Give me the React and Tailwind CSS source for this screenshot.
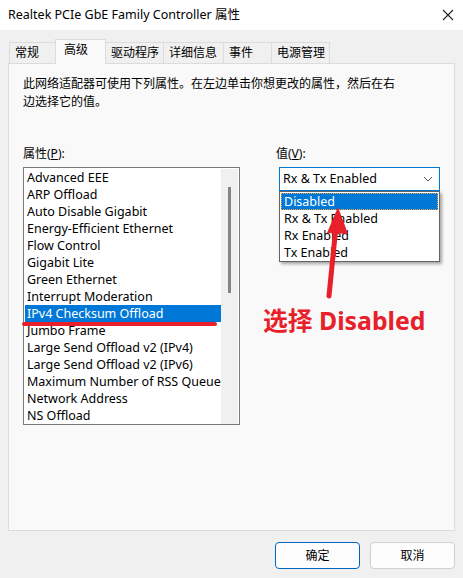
import React from "react";

const FONT = { fontFamily: '"Noto Sans", "Noto Sans CJK SC", sans-serif' };

const props = [
  "Advanced EEE",
  "ARP Offload",
  "Auto Disable Gigabit",
  "Energy-Efficient Ethernet",
  "Flow Control",
  "Gigabit Lite",
  "Green Ethernet",
  "Interrupt Moderation",
  "IPv4 Checksum Offload",
  "Jumbo Frame",
  "Large Send Offload v2 (IPv4)",
  "Large Send Offload v2 (IPv6)",
  "Maximum Number of RSS Queues",
  "Network Address",
  "NS Offload",
];

const tabs = [
  { t: "常规", w: "w-[47px]" },
  { t: "高级", w: "w-[51px]", sel: true },
  { t: "驱动程序", w: "w-[59px]" },
  { t: "详细信息", w: "w-[61px]" },
  { t: "事件", w: "w-[49px]" },
  { t: "电源管理", w: "w-[59px]" },
];

export default function App() {
  return (
    <div
      className="relative w-[463px] h-[578px] bg-[#f0f0f0] overflow-hidden text-[12px] text-black"
      style={FONT}
    >
      {/* title bar */}
      <div className="h-[30px] bg-white flex items-center justify-between pl-[8px] pr-[9px]">
        <span className="text-[12.5px] text-black leading-none">Realtek PCIe GbE Family Controller 属性</span>
        <svg width="12" height="12" viewBox="0 0 12 12">
          <path d="M1 1 L11 11 M11 1 L1 11" stroke="#222" strokeWidth="1.1" />
        </svg>
      </div>

      {/* tabs */}
      <div className="px-[8px] pt-[9px]">
        <div className="flex items-end h-[24px] pl-[1px] relative z-10">
          {tabs.map((tb) =>
            tb.sel ? (
              <div
                key={tb.t}
                className={`${tb.w} h-[25px] -ml-[1px] bg-[#f9f9f9] border border-[#dcdcdc] border-b-0 pl-[8px] pt-[1px] text-[12px] leading-[18px] -mb-[1px] whitespace-nowrap`}
              >
                {tb.t}
              </div>
            ) : (
              <div
                key={tb.t}
                className={`${tb.w} h-[21px] bg-[#f0f0f0] border border-[#dcdcdc] border-b-0 -ml-[1px] first:ml-0 pl-[5px] text-[12px] leading-[20px] whitespace-nowrap`}
              >
                {tb.t}
              </div>
            )
          )}
        </div>

        {/* panel */}
        <div className="h-[468px] bg-[#f9f9f9] border border-[#dcdcdc] px-[14px] pt-[11px] flex flex-col">
          <p className="text-[12px] leading-[18px] w-[378px]">
            此网络适配器可使用下列属性。在左边单击你想更改的属性，然后在右边选择它的值。
          </p>
          <div className="flex mt-[35px]">
            <div className="flex flex-col w-[217px]">
              <div className="text-[12px] leading-[16px] mb-[5px]">
                属性(<span className="underline">P</span>):
              </div>
              <div className="h-[258px] border border-[#7a7a7a] bg-white flex pl-[1px] pt-[1px]">
                <div className="flex-1 flex flex-col overflow-hidden">
                  {props.map((p) => (
                    <div
                      key={p}
                      className={`h-[17px] leading-[17px] pl-[2px] whitespace-nowrap text-[12.5px] ${
                        p === "IPv4 Checksum Offload" ? "bg-[#0078d7] text-white" : ""
                      }`}
                    >
                      {p}
                    </div>
                  ))}
                </div>
                <div className="w-[17px] bg-[#f0f0f0] flex justify-center pt-[18px]">
                  <div className="w-[3px] h-[106px] bg-[#858585]" />
                </div>
                <div className="w-[1px]" />
              </div>
            </div>

            <div className="flex flex-col ml-[36px]">
              <div className="text-[12px] leading-[16px] mb-[5px]">
                值(<span className="underline">V</span>):
              </div>
              <div className="relative w-[161px] ml-[3px]">
                <div className="h-[24px] border border-[#0078d7] bg-white flex items-center justify-between pl-[3px] pr-[6px]">
                  <span className="text-[12.5px]">Rx &amp; Tx Enabled</span>
                  <svg width="10" height="6" viewBox="0 0 10 6">
                    <path d="M1 1 L5 5 L9 1" stroke="#555" strokeWidth="1" fill="none" />
                  </svg>
                </div>
                {/* open dropdown list */}
                <div className="absolute left-0 top-[24px] w-[161px] h-[71px] bg-white border border-[#646464] shadow-[2px_2px_3px_rgba(0,0,0,0.35)] pt-[1px] px-[1px] z-10 text-[12.5px]">
                  <div className="h-[17px] leading-[15px] bg-[#0078d7] text-white pl-[2px] border border-dotted border-[#f0a040]">
                    Disabled
                  </div>
                  <div className="h-[17px] leading-[17px] pl-[3px]">Rx &amp; Tx Enabled</div>
                  <div className="h-[17px] leading-[17px] pl-[3px]">Rx Enabled</div>
                  <div className="h-[17px] leading-[17px] pl-[3px]">Tx Enabled</div>
                </div>
              </div>
            </div>
          </div>
        </div>

        {/* buttons */}
        <div className="flex justify-end gap-[10px] mt-[11px]">
          <button className="w-[85px] h-[27px] rounded-[4px] border border-[#0067c0] bg-[#fdfdfd] text-[12px]">
            确定
          </button>
          <button className="w-[85px] h-[27px] rounded-[4px] border border-[#d0d0d0] bg-[#fdfdfd] text-[12px]">
            取消
          </button>
        </div>
      </div>

      {/* annotations */}
      <div className="absolute left-[22px] top-[322px] w-[195px] h-[4px] rounded-full bg-[#e8202a] z-20" />
      <svg className="absolute left-0 top-0 z-20" width="463" height="578">
        <path d="M329 296 L336 226" stroke="#e8202a" strokeWidth="5" strokeLinecap="round" />
        <path d="M338 207 L327 233 L348 234 Z" fill="#e8202a" />
      </svg>
      <div className="absolute left-[263px] top-[302px] z-20 text-[24.8px] font-bold text-[#e8202a] leading-[36px] whitespace-nowrap">
        选择 Disabled
      </div>
    </div>
  );
}
